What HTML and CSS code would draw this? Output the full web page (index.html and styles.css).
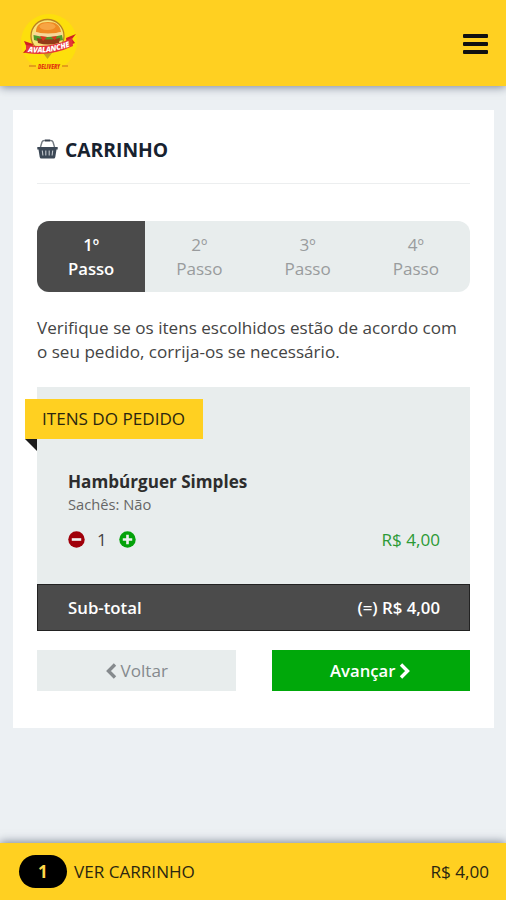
FILE: index.html
```html
<!DOCTYPE html>
<html lang="pt-BR">
<head>
    <meta charset="UTF-8">
    <meta name="viewport" content="width=device-width, initial-scale=1.0">
    <title>Carrinho</title>
    <link rel="stylesheet" href="styles.css">
</head>
<body>

    <!-- Topo -->
    <header class="topo">
        <svg class="logo" viewBox="0 0 60 60" aria-label="Logo">
            <circle cx="30" cy="30" r="28" fill="#fddf0c"/>
            <circle cx="28.500" cy="24" r="16.500" fill="#f8e27a" stroke="#b98023" stroke-width="1.300"/>
            <path d="M17 20C17 13 21 10 29 10s12 3 13 10q-13 4-25 0z" fill="#ef8a22"/>
            <ellipse cx="28.500" cy="14.500" rx="8" ry="3.500" fill="#f7a544"/>
            <path d="M16 20q13 3 26 0 2 2 1 4-14 4-28 0-1-2 1-4z" fill="#f6d79a"/>
            <path d="M14.500 23q14 4 28.500 0l1 5q-15 5-29 0z" fill="#4f9a2c"/>
            <path d="M18 26q10 3 23 0l-1 5q-11 3-21 0z" fill="#933a19"/>
            <path d="M21 24l7 1-4 4zM32 25l6-1-2 4z" fill="#e0331f"/>
            <path d="M24 41h9l-4.500 6z" fill="#c7a51c"/>
            <path d="M5 29l9 3-1 8-9 1 4-5zM57 22l-10 4 1 8 8-3-3-4z" fill="#d01f24"/>
            <path d="M7 33Q31 37 53 26l1 8Q31 45 7 41z" fill="#e5353a"/>
            <path id="faixa" d="M9 40Q31 42.500 53 33.500" fill="none"/>
            <text class="logo-faixa"><textPath href="#faixa" textLength="43">AVALANCHE</textPath></text>
            <path d="M10 54h7M43 54h6" stroke="#c96a16" stroke-width="1"/>
            <text class="logo-sub" x="19" y="56.500" textLength="22" lengthAdjust="spacingAndGlyphs">DELIVERY</text>
        </svg>
        <button class="menu" aria-label="Menu"><span></span><span></span><span></span></button>
    </header>

    <!-- Carrinho -->
    <main class="carrinho">
        <h1 class="titulo">
            <svg class="cesta" viewBox="0 0 21 20">
                <path d="M3.500 8L5 3Q5.500 1.500 7.500 1.500h6q2 0 2.500 1.500L17.500 8" fill="none" stroke="#737a82" stroke-width="1.400"/>
                <path d="M8 1.500h5" stroke="#39434f" stroke-width="1.800"/>
                <path d="M.3 8h20.400v2.500h-1.200L18.300 18q-.3 1.500-1.500 1.500h-12.600Q3 19.500 2.700 18L1.500 10.500H.3z" fill="#3c4856"/>
                <path d="M5.300 11.500l.6 5M8.800 11.500v5M12.200 11.500v5M15.700 11.500l-.6 5" stroke="#c3c8ce" stroke-width="1.100"/>
            </svg>
            <span>CARRINHO</span>
        </h1>

        <ol class="passos">
            <li class="passo ativo">1º<br>Passo</li>
            <li class="passo">2º<br>Passo</li>
            <li class="passo">3º<br>Passo</li>
            <li class="passo">4º<br>Passo</li>
        </ol>

        <p class="aviso">Verifique se os itens escolhidos estão de acordo com o seu pedido, corrija-os se necessário.</p>

        <section class="pedido">
            <h2 class="etiqueta">ITENS DO PEDIDO</h2>
            <div class="item">
                <h3 class="item-nome">Hambúrguer Simples</h3>
                <div class="item-extra">Sachês: Não</div>
                <div class="item-linha">
                    <div class="quantidade">
                        <svg class="icone-qtd" viewBox="0 0 18 18"><circle cx="9" cy="9" r="8.700" fill="#a0000a"/><path d="M4 9h10" stroke="#eef0f0" stroke-width="2.800"/></svg>
                        <span>1</span>
                        <svg class="icone-qtd" viewBox="0 0 18 18"><circle cx="9" cy="9" r="8.700" fill="#04a20a"/><path d="M4 9h10M9 4v10" stroke="#eef0f0" stroke-width="2.800"/></svg>
                    </div>
                    <span class="preco">R$ 4,00</span>
                </div>
            </div>
            <div class="subtotal">
                <span>Sub-total</span>
                <span>(=) R$ 4,00</span>
            </div>
        </section>

        <div class="botoes">
            <button class="botao voltar">
                <svg class="seta" viewBox="0 0 12 16"><path d="M10 1.500L3.500 8l6.500 6.500"/></svg>
                <span>Voltar</span>
            </button>
            <button class="botao avancar">
                <span>Avançar</span>
                <svg class="seta" viewBox="0 0 12 16"><path d="M2 1.500L8.500 8 2 14.500"/></svg>
            </button>
        </div>
    </main>

    <!-- Barra inferior -->
    <footer class="rodape">
        <span class="contador">1</span>
        <span>VER CARRINHO</span>
        <span class="total">R$ 4,00</span>
    </footer>

</body>
</html>
```
FILE: styles.css
```css
* { box-sizing: border-box; }

body {
    font-family: "Open Sans", "Noto Sans", sans-serif;
    font-size: 17.1px;
    line-height: 23.5px;
    color: #444;
    background-color: #ecf0f3;
    margin: 0;
    height: 900px;
    display: flex;
    flex-direction: column;
    overflow: hidden;
}

h1, h2, h3, p, ol { margin: 0; padding: 0; }
button { font: inherit; border: 0; padding: 0; cursor: pointer; }

/* Topo */
.topo {
    height: 86px;
    flex-shrink: 0;
    padding: 0 18px 0 19px;
    background-color: #ffd021;
    box-shadow: 0 1px 9px rgba(60, 70, 95, 0.65);
    display: flex;
    justify-content: space-between;
    align-items: center;
}
.logo { width: 60px; height: 60px; margin-top: -2px; }
.logo-faixa { font-size: 7.5px; font-weight: 800; font-style: italic; fill: #fff; }
.logo-sub { font-size: 6.5px; font-weight: 800; font-style: italic; fill: #e2350f; }
.menu {
    width: 25px;
    background: none;
    display: flex;
    flex-direction: column;
    gap: 4px;
    margin-top: 2px;
}
.menu span { height: 4px; border-radius: 1px; background-color: #111; }

/* Carrinho */
.carrinho {
    margin: 24px 12px 0 13px;
    padding: 24px 24px 37px;
    height: 618px;
    background-color: #fff;
}
.titulo {
    height: 50px;
    border-bottom: 1px solid #eceeef;
    display: flex;
    align-items: flex-start;
    gap: 7px;
    font-size: 19.3px;
    line-height: 32px;
    font-weight: 700;
    color: #17222f;
}
.cesta { width: 21px; height: 20px; margin-top: 5px; }

.passos {
    list-style: none;
    display: grid;
    grid-template-columns: repeat(4, 1fr);
    height: 71px;
    margin-top: 37px;
    border-radius: 12px;
    overflow: hidden;
    background-color: #e8eded;
    text-align: center;
    color: #999c9d;
}
.passo { padding-top: 12px; }
.passo.ativo { background-color: #4b4b4b; color: #fff; font-size: 16.7px; font-weight: 600; }

.aviso { margin-top: 24px; }

/* Pedido */
.pedido {
    margin-top: 24px;
    height: 244px;
    padding-top: 12px;
    background-color: #e8eded;
    display: flex;
    flex-direction: column;
}
.etiqueta {
    position: relative;
    width: 178px;
    height: 40px;
    margin-left: -12px;
    padding-left: 17px;
    background-color: #ffd021;
    color: #2b2610;
    font-size: 17.1px;
    font-weight: 400;
    line-height: 40px;
}
/* dobra da fita */
.etiqueta::after {
    content: "";
    position: absolute;
    left: 0;
    top: 100%;
    border-top: 12px solid #1b1b1b;
    border-left: 12px solid transparent;
}
.item { padding: 31px 30px 0 31px; }
.item-nome { font-size: 17.1px; line-height: 24px; font-weight: 700; color: #2d2d2d; }
.item-extra { font-size: 14.7px; line-height: 20px; color: #666; }
.item-linha {
    margin-top: 14px;
    display: flex;
    justify-content: space-between;
    align-items: center;
}
.quantidade { display: flex; align-items: center; gap: 12px; }
.icone-qtd { width: 17px; height: 17px; }
.preco { color: #2c9a36; }
.subtotal {
    margin-top: auto;
    height: 47px;
    padding: 0 29px 0 30px;
    border: 1px solid #222;
    background-color: #4b4b4b;
    color: #fff;
    font-size: 16.8px;
    font-weight: 600;
    display: flex;
    justify-content: space-between;
    align-items: center;
}

/* Botões */
.botoes { display: flex; gap: 36px; margin-top: 19px; }
.botao {
    flex: 1;
    height: 41px;
    display: flex;
    justify-content: center;
    align-items: center;
    gap: 4px;
}
.voltar { background-color: #e8eded; color: #858a8d; }
.avancar { background-color: #00a80a; color: #fff; font-size: 16.7px; font-weight: 600; }
.seta { width: 12px; height: 16px; fill: none; stroke: currentColor; stroke-width: 3.4; }

/* Rodapé */
.rodape {
    height: 57px;
    flex-shrink: 0;
    margin-top: auto;
    padding: 0 17px 0 19px;
    background-color: #ffd021;
    box-shadow: 0 -1px 9px rgba(60, 70, 95, 0.65);
    color: #2b2610;
    display: flex;
    align-items: center;
}
.contador {
    width: 48px;
    height: 33px;
    margin-right: 7px;
    border-radius: 17px;
    background-color: #000;
    color: #ffd94a;
    font-weight: 700;
    line-height: 34px;
    text-align: center;
}
.total { margin-left: auto; }
```
